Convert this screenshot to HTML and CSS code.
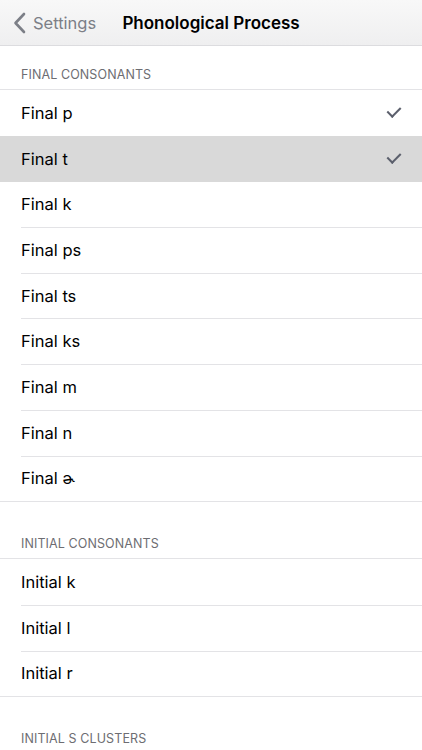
FILE: index.html
```html
<!DOCTYPE html>
<html lang="en">
<head>
  <meta charset="UTF-8">
  <meta name="viewport" content="width=device-width, initial-scale=1.0">
  <title>Phonological Process</title>
  <link rel="stylesheet" href="styles.css">
</head>
<body>
  <div class="navbar">
    <a class="back" href="#">
      <svg class="chevron" width="13" height="22" viewBox="0 0 13 22">
        <path d="M11 2 L2.5 11 L11 20" fill="none" stroke="#7c7f87" stroke-width="2.6" stroke-linecap="round" stroke-linejoin="round"/>
      </svg>
      <span>Settings</span>
    </a>
    <h1 class="title">Phonological Process</h1>
  </div>

  <div class="section-header">Final Consonants</div>
  <ul class="group">
    <li class="row">Final p <span class="check"></span></li>
    <li class="row selected">Final t <span class="check"></span></li>
    <li class="row">Final k</li>
    <li class="row">Final ps</li>
    <li class="row">Final ts</li>
    <li class="row">Final ks</li>
    <li class="row">Final m</li>
    <li class="row">Final n</li>
    <li class="row">Final ɚ</li>
  </ul>

  <div class="section-header">Initial Consonants</div>
  <ul class="group">
    <li class="row">Initial k</li>
    <li class="row">Initial l</li>
    <li class="row">Initial r</li>
  </ul>

  <div class="section-header">Initial S Clusters</div>
</body>
</html>
```

FILE: styles.css
```css
body {
  margin: 0;
  font-family: Inter, "Noto Sans", "DejaVu Sans", sans-serif;
  background: #fff;
  color: #000;
  width: 422px;
  height: 750px;
  overflow: hidden;
}
.navbar {
  height: 45px;
  display: flex;
  align-items: center;
  justify-content: center;
  position: relative;
  background: linear-gradient(#f8f8f8, #efeff0);
  border-bottom: 1px solid #dcdcdf;
}
.back {
  position: absolute;
  left: 13px;
  top: 0;
  height: 45px;
  display: flex;
  align-items: center;
  gap: 7px;
  color: #7c7f87;
  text-decoration: none;
  font-size: 16.5px;
}
.title {
  margin: 0;
  font-size: 17px;
  font-weight: 600;
}
.section-header {
  padding: 21px 21px 7px;
  font-size: 12.5px;
  text-transform: uppercase;
  color: #6d6d72;
  letter-spacing: 0.1px;
}
.group + .section-header {
  padding-top: 34px;
}
.group {
  list-style: none;
  margin: 0;
  padding: 0;
  border-top: 1px solid #e3e3e6;
  border-bottom: 1px solid #e3e3e6;
}
.row {
  position: relative;
  height: 45.7px;
  box-sizing: border-box;
  padding: 0 21px;
  display: flex;
  align-items: center;
  justify-content: space-between;
  font-size: 16.5px;
}
.row + .row::before {
  content: "";
  position: absolute;
  top: 0;
  left: 21px;
  right: 0;
  border-top: 1px solid #e3e3e6;
}
.row.selected {
  background: #d9d9d9;
}
.row.selected::before,
.row.selected + .row::before {
  left: 0;
  border-color: #d9d9d9;
}
.check {
  width: 6px;
  height: 11px;
  margin-right: 3px;
  margin-top: -4px;
  border-right: 2px solid #5b5f6c;
  border-bottom: 2px solid #5b5f6c;
  transform: rotate(45deg);
}
```
